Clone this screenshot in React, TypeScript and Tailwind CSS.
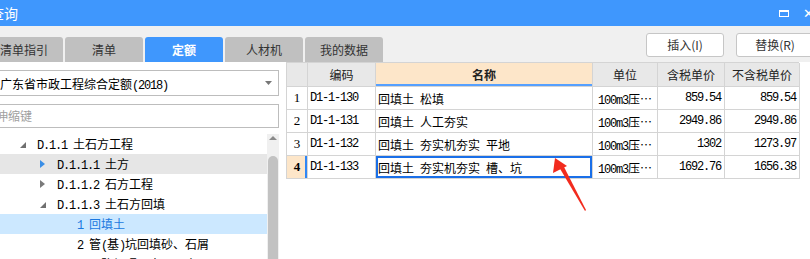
import React from "react";

const cjk = "font-['Noto_Sans_CJK_SC',sans-serif]";
const mono = "font-['Liberation_Mono',monospace] text-[12px] tracking-[-1.2px]";

// ascii runs in the narrow mono face, the rest in the CJK face
function Mixed({ text }: { text: string }) {
  const parts = text.match(/[\x20-\x7e]+|[^\x20-\x7e]+/g) ?? [];
  return (
    <>
      {parts.map((p, i) =>
        /^[\x20-\x7e]+$/.test(p) ? (
          <span key={i} className={`${mono} whitespace-pre`}>
            {p}
          </span>
        ) : (
          <span key={i} className={`${cjk} text-[12px]`}>
            {p}
          </span>
        )
      )}
    </>
  );
}

const tabs = [
  { label: "清单指引" },
  { label: "清单" },
  { label: "定额", active: true },
  { label: "人材机" },
  { label: "我的数据" },
];

type TreeRow = {
  level: number;
  text: string;
  arrow?: "open" | "closed" | "closed-blue";
  bg?: string;
  color?: string;
};

const tree: TreeRow[] = [
  { level: 0, text: "D.1.1 土石方工程", arrow: "open" },
  { level: 1, text: "D.1.1.1 土方", arrow: "closed-blue", bg: "bg-[#e6e6e6]" },
  { level: 1, text: "D.1.1.2 石方工程", arrow: "closed" },
  { level: 1, text: "D.1.1.3 土石方回填", arrow: "open" },
  { level: 2, text: "1 回填土", bg: "bg-[#cce8ff]", color: "text-[#1a78e0]" },
  { level: 2, text: "2 管(基)坑回填砂、石屑" },
  { level: 2, text: "3 压路机碾压土(石)方" },
];

const rows = [
  { code: "D1-1-130", name: "回填土 松填", unit: "100m3压", tax: "859.54", notax: "859.54" },
  { code: "D1-1-131", name: "回填土 人工夯实", unit: "100m3压", tax: "2949.86", notax: "2949.86" },
  { code: "D1-1-132", name: "回填土 夯实机夯实 平地", unit: "100m3压", tax: "1302", notax: "1273.97" },
  { code: "D1-1-133", name: "回填土 夯实机夯实 槽、坑", unit: "100m3压", tax: "1692.76", notax: "1656.38" },
];

const cols = "grid grid-cols-[21px_68px_217px_65px_67px_75px]";
const cell = "border-r border-b border-[#d4d4d4] flex items-center overflow-hidden whitespace-nowrap";

function Arrow({ kind }: { kind?: TreeRow["arrow"] }) {
  if (!kind) return null;
  if (kind === "open")
    return (
      <svg width="6" height="6" viewBox="0 0 6 6" className="mt-[2px]">
        <polygon points="6,0 6,6 0,6" fill="#707070" />
      </svg>
    );
  return (
    <svg width="5" height="8" viewBox="0 0 5 8">
      <polygon points="0,0 5,4 0,8" fill={kind === "closed-blue" ? "#3a8ee6" : "#7a7a7a"} />
    </svg>
  );
}

export default function App() {
  return (
    <div className={`relative w-[810px] h-[259px] overflow-hidden bg-[#f0f0f0] text-black ${cjk}`}>
      {/* title bar */}
      <div className="h-[26px] bg-[#3f97fd] flex items-center justify-between overflow-hidden">
        <span className="-ml-[10px] text-[14px] text-white leading-none">查询</span>
        <div className="flex items-center gap-[14px] -mr-[4px]">
          <div className="w-[10px] h-[7px] border border-white border-t-2" />
          <span className="text-white text-[13px] leading-none font-['DejaVu_Sans',sans-serif]">✕</span>
        </div>
      </div>

      {/* tab strip + buttons */}
      <div className="h-[36px] flex justify-between">
        <div className="flex gap-[2px] -ml-[15px] items-end">
          {tabs.map((t) => (
            <div
              key={t.label}
              className={`w-[78px] h-[25px] rounded-t-[3px] flex items-center justify-center text-[12px] ${
                t.active ? "bg-[#3f97fd] text-white font-bold" : "bg-[#c0c0c0] text-[#333]"
              }`}
            >
              {t.label}
            </div>
          ))}
        </div>
        <div className="flex gap-[12px] mt-[7px] -mr-[4px]">
          {["插入(I)", "替换(R)"].map((b) => (
            <button
              key={b}
              type="button"
              className="w-[78px] h-[24px] bg-white border border-[#c6c6c6] rounded-[3px] text-[12px] text-[#333] flex items-center justify-center"
            >
              {b}
            </button>
          ))}
        </div>
      </div>

      {/* body */}
      <div className="flex h-[197px]">
        {/* left panel */}
        <div className="w-[286px] bg-white pt-[8px] pr-[7px] flex flex-col">
          <div className="-ml-[10px] h-[26px] border border-[#bdbdbd] bg-white flex items-center justify-between pl-[9px] pr-[6px]">
            <span className="leading-none">
              <Mixed text="广东省市政工程综合定额(2018)" />
            </span>
            <svg width="7" height="4" viewBox="0 0 7 4">
              <polygon points="0,0 7,0 3.5,4" fill="#777" />
            </svg>
          </div>
          <div className="-ml-[10px] mt-[8px] h-[24px] border border-[#bdbdbd] bg-white flex items-center pl-[5px]">
            <span className="text-[12px] text-[#a0a0a0] leading-none">伸缩键</span>
          </div>
          <div className="mt-[6px] flex flex-1 min-h-0">
            <div className="flex-1 flex flex-col">
              {tree.map((r) => (
                <div
                  key={r.text}
                  className={`h-[20px] shrink-0 flex items-center ${r.bg ?? ""} ${r.color ?? ""}`}
                  style={{ paddingLeft: 20 + r.level * 20 }}
                >
                  <div className="w-[17px] flex items-center">
                    <Arrow kind={r.arrow} />
                  </div>
                  <span className="leading-none -mt-[3px]">
                    <Mixed text={r.text} />
                  </span>
                </div>
              ))}
            </div>
            <div className="w-[12px] bg-[#f0f0f0] flex flex-col items-center">
              <svg width="8" height="4" viewBox="0 0 8 4" className="mt-[2px]">
                <polygon points="0,4 8,4 4,0" fill="#8a8a8a" />
              </svg>
              <div className="mt-[16px] w-[10px] flex-1 bg-[#c2c2c2] rounded-t-full" />
            </div>
          </div>
        </div>

        {/* quota table */}
        <div className="flex-1 bg-white">
          <div className="w-[513px] border-l border-t border-[#d4d4d4]">
            <div className={`${cols} h-[24px] text-[12px] text-[#222]`}>
              <div className={`${cell} bg-[#e8e8e8]`} />
              <div className={`${cell} bg-[#e8e8e8] justify-center`}>编码</div>
              <div className={`${cell} bg-[#fde6c9] justify-center font-bold shadow-[inset_0_-2px_0_#55a0ff]`}>名称</div>
              <div className={`${cell} bg-[#e8e8e8] justify-center`}>单位</div>
              <div className={`${cell} bg-[#e8e8e8] justify-center`}>含税单价</div>
              <div className={`${cell} bg-[#e8e8e8] justify-center`}>不含税单价</div>
            </div>
            {rows.map((r, i) => {
              const sel = i === 3;
              return (
                <div key={r.code} className={`${cols} h-[23px]`}>
                  <div
                    className={`${cell} justify-center font-['Liberation_Serif',serif] text-[13px] ${
                      sel ? "bg-[#fde6c9] font-bold shadow-[inset_-2px_0_0_#2f86f5]" : ""
                    }`}
                  >
                    {i + 1}
                  </div>
                  <div className={`${cell} pl-[2px] ${mono}`}>{r.code}</div>
                  <div className={`${cell} pl-[2px] ${sel ? "ring-2 ring-inset ring-[#1a6fe8]" : ""}`}>
                    <span className="leading-none">
                      <Mixed text={r.name} />
                    </span>
                  </div>
                  <div className={`${cell} justify-center`}>
                    <span className="leading-none">
                      <Mixed text={r.unit} />
                      <span className="text-[12px]">⋯</span>
                    </span>
                  </div>
                  <div className={`${cell} justify-end pr-[3px] ${mono}`}>{r.tax}</div>
                  <div className={`${cell} justify-end pr-[3px] ${mono}`}>{r.notax}</div>
                </div>
              );
            })}
          </div>
        </div>
      </div>

      {/* red annotation arrow */}
      <svg className="absolute left-0 top-0 pointer-events-none" width="810" height="259" viewBox="0 0 810 259">
        <polygon points="555,158 553,173 567,166" fill="#f22b1e" />
        <polygon points="559,167 563,165 586,210 585,211" fill="#f22b1e" />
      </svg>
    </div>
  );
}
